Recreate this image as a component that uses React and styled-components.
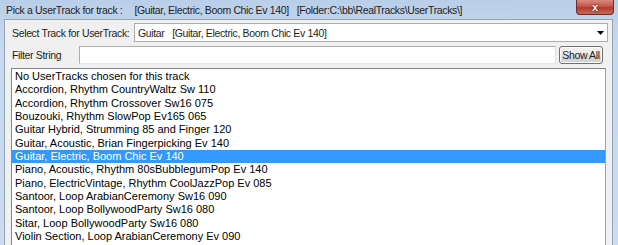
import React from "react";
import styled, { createGlobalStyle } from "styled-components";

const GlobalStyle = createGlobalStyle`
  html, body {
    margin: 0;
    padding: 0;
    background: #c8daef;
    overflow: hidden;
  }
`;

const Window = styled.div`
  width: 618px;
  height: 245px;
  overflow: hidden;
  box-sizing: border-box;
  padding: 0 5px 0 4px;
  display: flex;
  flex-direction: column;
  background: linear-gradient(#b9cee8, #c6d8ee 40px, #cbdcf0);
  font-family: "Liberation Sans", Arial, sans-serif;
`;

const TitleBar = styled.div`
  height: 19px;
  flex: none;
  display: flex;
  align-items: flex-start;
  font-size: 10.5px;
  letter-spacing: -0.35px;
  color: #1e1e1e;
`;

const TitleText = styled.span`
  margin-top: 4px;
  margin-left: ${(p) => p.gap || 0}px;
  white-space: pre;
`;

const CloseButton = styled.div`
  margin-left: auto;
  margin-right: -1px;
  width: 38px;
  height: 15px;
  box-sizing: border-box;
  border: 1px solid #6a2b2b;
  border-top: none;
  border-radius: 0 0 4px 4px;
  background: linear-gradient(#d98a7e, #c4564a 45%, #b33a2f 55%, #c8695a);
  display: flex;
  align-items: center;
  justify-content: center;
  color: #fff;
  font-weight: bold;
  font-size: 11px;
  text-shadow: 0 0 2px #4a1010, 0 0 1px #4a1010;
`;

const Panel = styled.div`
  flex: 1;
  background: #f0f0f0;
  border-top: 1px solid #90a4be;
  border-left: 1px solid #90a4be;
  border-right: 1px solid #90a4be;
  padding: 3px 4px 0 6px;
  display: flex;
  flex-direction: column;
  gap: 4px;
  font-size: 10.5px;
  letter-spacing: -0.35px;
  color: #1e1e1e;
`;

const Row = styled.div`
  display: flex;
  align-items: center;
  flex: none;
  height: ${(p) => p.h}px;
`;

const Label = styled.div`
  width: ${(p) => p.w}px;
  flex: none;
  padding-left: 1px;
`;

const Combo = styled.div`
  flex: 1;
  height: 100%;
  box-sizing: border-box;
  border: 1px solid #abadb3;
  background: #fff;
  display: flex;
  align-items: center;
  padding: 0 3px 0 3px;
  white-space: pre;
`;

const Arrow = styled.svg`
  margin-left: auto;
  flex: none;
`;

const TextInput = styled.div`
  flex: 1;
  height: 100%;
  box-sizing: border-box;
  border: 1px solid #abadb3;
  border-right-color: #dbdfe6;
  border-bottom-color: #e3e9ef;
  background: #fff;
`;

const Button = styled.div`
  margin-left: 3px;
  margin-right: 5px;
  width: 44px;
  height: 18px;
  box-sizing: border-box;
  border: 1px solid #707070;
  border-radius: 3px;
  background: linear-gradient(#f2f2f2, #ebebeb 50%, #dddddd 51%, #cfcfcf);
  box-shadow: inset 0 0 0 1px #fcfcfc;
  display: flex;
  align-items: center;
  justify-content: center;
`;

const List = styled.div`
  flex: 1;
  margin-right: 2px;
  box-sizing: border-box;
  border: 1px solid #828790;
  border-right-color: #a0a0a0;
  border-bottom: none;
  background: #fff;
  padding-top: 1px;
  font-family: "Liberation Sans", Arial, sans-serif;
  font-size: 11px;
  letter-spacing: 0;
  color: #000;
`;

const Item = styled.div`
  height: 13.33px;
  line-height: 13.33px;
  padding-left: 3px;
  white-space: nowrap;
  background: ${(p) => (p.selected ? "#3399ff" : "transparent")};
  color: ${(p) => (p.selected ? "#fff" : "#000")};
`;

const tracks = [
  "No UserTracks chosen for this track",
  "Accordion, Rhythm CountryWaltz Sw 110",
  "Accordion, Rhythm Crossover Sw16 075",
  "Bouzouki, Rhythm SlowPop Ev165 065",
  "Guitar Hybrid, Strumming 85 and Finger 120",
  "Guitar, Acoustic, Brian Fingerpicking Ev 140",
  "Guitar, Electric, Boom Chic Ev 140",
  "Piano, Acoustic, Rhythm 80sBubblegumPop Ev 140",
  "Piano, ElectricVintage, Rhythm CoolJazzPop Ev 085",
  "Santoor, Loop ArabianCeremony Sw16 090",
  "Santoor, Loop BollywoodParty Sw16 080",
  "Sitar, Loop BollywoodParty Sw16 080",
  "Violin Section, Loop ArabianCeremony Ev 090",
];

export default function App() {
  return (
    <>
      <GlobalStyle />
      <Window>
        <TitleBar>
          <TitleText gap={2}>Pick a UserTrack for track :</TitleText>
          <TitleText gap={12}>[Guitar, Electric, Boom Chic Ev 140]</TitleText>
          <TitleText gap={8}>[Folder:C:\bb\RealTracks\UserTracks\]</TitleText>
          <CloseButton>x</CloseButton>
        </TitleBar>
        <Panel>
          <Row h={19}>
            <Label w={122}>Select Track for UserTrack:</Label>
            <Combo>
              {"Guitar   [Guitar, Electric, Boom Chic Ev 140]"}
              <Arrow width="7" height="4" viewBox="0 0 7 4">
                <path d="M0 0h7L3.5 4z" fill="#000" />
              </Arrow>
            </Combo>
          </Row>
          <Row h={18}>
            <Label w={67}>Filter String</Label>
            <TextInput />
            <Button>Show All</Button>
          </Row>
          <List>
            {tracks.map((t, i) => (
              <Item key={t} selected={i === 6}>
                {t}
              </Item>
            ))}
          </List>
        </Panel>
      </Window>
    </>
  );
}
